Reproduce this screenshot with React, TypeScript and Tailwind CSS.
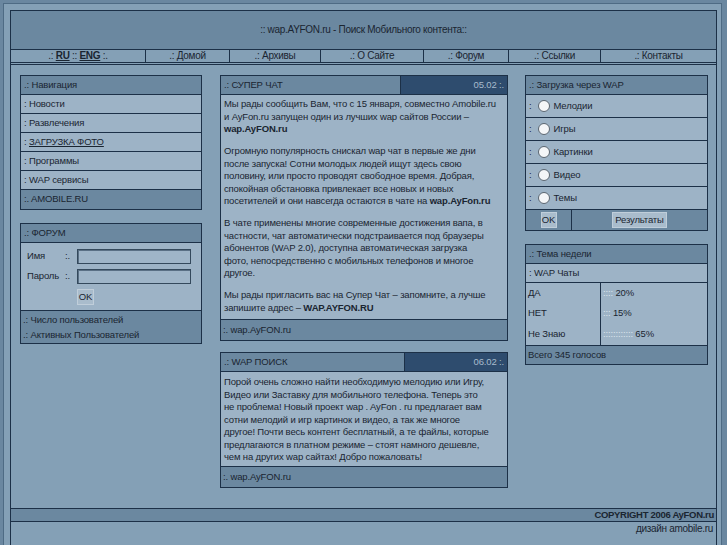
import React from "react";

const B = "border-[#1c3047]";

function BoxHead({ children }: { children: React.ReactNode }) {
  return (
    <div className={`h-[19px] bg-[#6b88a0] border-b ${B} flex items-center pl-[3px] whitespace-nowrap`}>
      {children}
    </div>
  );
}

function NavRow({ children, last }: { children: React.ReactNode; last?: boolean }) {
  return (
    <div
      className={`h-[19px] flex items-center pl-[3px] whitespace-nowrap ${
        last ? "bg-[#6b88a0]" : `border-b ${B}`
      }`}
    >
      {children}
    </div>
  );
}

function Radio({ label }: { label: string }) {
  return (
    <div className={`h-[23px] border-b ${B} flex items-center pl-[3px] whitespace-nowrap`}>
      <span>:</span>
      <span className="ml-[6px] w-[12px] h-[12px] rounded-full bg-[#f4f6f8] border border-[#5a6570]" />
      <span className="ml-[4px]">{label}</span>
    </div>
  );
}

function NewsHead({ title, date, split }: { title: string; date: string; split: string }) {
  return (
    <div className={`h-[19px] flex border-b ${B}`}>
      <div className={`${split} bg-[#6b88a0] border-r ${B} flex items-center pl-[3px] whitespace-nowrap`}>
        {title}
      </div>
      <div className="flex-1 bg-[#2e4c6e] text-[#a7bbcd] flex items-center justify-end pr-[3px] whitespace-nowrap">
        {date}
      </div>
    </div>
  );
}

const navItems = [
  { w: "w-[84px]", t: ".: Домой" },
  { w: "w-[91px]", t: ".: Архивы" },
  { w: "w-[103px]", t: ".: О Сайте" },
  { w: "w-[85px]", t: ".: Форум" },
  { w: "w-[92px]", t: ".: Ссылки" },
];

const narrow = "tracking-[-0.3px]";

export default function App() {
  return (
    <div className="min-h-[545px] bg-[#6a87a0] pt-[3px] pl-[3px] font-['Liberation_Sans',Arial,sans-serif] text-[9.5px] tracking-[-0.15px] leading-[12.5px] text-[#1a2531] overflow-hidden">
      <div className="w-[719px] border border-[#4e6b84] bg-[#84a0b6] pt-[6px] pl-[6px] pr-[4px] pb-[30px]">
        <div className={`w-[707px] border ${B} bg-[#84a0b6]`}>
          {/* header */}
          <div className={`h-[39px] bg-[#6b88a0] border-b ${B} flex items-center justify-center text-[10px] ${narrow}`}>
            :: wap.AYFON.ru - Поиск Мобильного контента::
          </div>
          {/* nav */}
          <div className={`h-[15px] flex border-b-[3px] border-double ${B} text-[10px] leading-[12px] ${narrow}`}>
            <div className={`w-[135px] border-r ${B} flex justify-center items-start whitespace-nowrap`}>
              .:&nbsp;<b className="underline font-bold">RU</b>&nbsp;::&nbsp;<b className="underline font-bold">ENG</b>&nbsp;:.
            </div>
            {navItems.map((n) => (
              <div key={n.t} className={`${n.w} border-r ${B} flex justify-center items-start whitespace-nowrap`}>
                {n.t}
              </div>
            ))}
            <div className="flex-1 flex justify-center items-start whitespace-nowrap">.: Контакты</div>
          </div>

          {/* content */}
          <div className="flex pt-[10px] pl-[9px] pb-[20px]">
            {/* left column */}
            <div className="w-[182px] flex flex-col">
              <div className={`border ${B} bg-[#9db3c6]`}>
                <BoxHead>.: Навигация</BoxHead>
                <NavRow>: Новости</NavRow>
                <NavRow>: Развлечения</NavRow>
                <NavRow>
                  :&nbsp;<span className="underline">ЗАГРУЗКА ФОТО</span>
                </NavRow>
                <NavRow>: Программы</NavRow>
                <NavRow>: WAP сервисы</NavRow>
                <NavRow last>:. AMOBILE.RU</NavRow>
              </div>

              <div className={`mt-[13px] border ${B} bg-[#9db3c6]`}>
                <BoxHead>.: ФОРУМ</BoxHead>
                <div className={`pt-[6px] pb-[5px] border-b ${B}`}>
                  <div className="flex items-center h-[15px]">
                    <span className="pl-[6px] w-[44px]">Имя</span>
                    <span className="w-[12px]">:.</span>
                    <input className="w-[114px] h-[15px] border border-[#34495c] bg-[#9fb5c8] shadow-[inset_1px_1px_0_#5a7085] outline-none" />
                  </div>
                  <div className="flex items-center h-[15px] mt-[5px]">
                    <span className="pl-[6px] w-[44px]">Пароль</span>
                    <span className="w-[12px]">:.</span>
                    <input className="w-[114px] h-[15px] border border-[#34495c] bg-[#9fb5c8] shadow-[inset_1px_1px_0_#5a7085] outline-none" />
                  </div>
                  <div className="mt-[5px] ml-[56px] w-[17px] h-[16px] bg-[#a9bccc] border border-[#c0ceda] flex items-center justify-center">
                    OK
                  </div>
                </div>
                <div className="bg-[#6b88a0] pt-[1px] pb-[1px] pl-[2px] leading-[15px] h-[32px]">
                  <div>.: Число пользователей</div>
                  <div>.: Активных Пользователей</div>
                </div>
              </div>
            </div>

            {/* middle column */}
            <div className="w-[288px] ml-[18px] flex flex-col">
              <div className={`border ${B} bg-[#9db3c6]`}>
                <NewsHead title=".: СУПЕР ЧАТ" date="05.02 :." split="w-[180px]" />
                <div className="pt-[3px] pb-[3px] pl-[3px] h-[224px] flex flex-col gap-[9.5px] whitespace-nowrap">
                  <p>
                    Мы рады сообщить Вам, что с 15 января, совместно Amobile.ru
                    <br />и AyFon.ru запущен один из лучших wap сайтов России –
                    <br />
                    <b>wap.AyFON.ru</b>
                  </p>
                  <p>
                    Огромную популярность снискал wap чат в первые же дни
                    <br />после запуска! Сотни молодых людей ищут здесь свою
                    <br />половину, или просто проводят свободное время. Добрая,
                    <br />спокойная обстановка привлекает все новых и новых
                    <br />посетителей и они навсегда остаются в чате на <b>wap.AyFon.ru</b>
                  </p>
                  <p>
                    В чате применены многие современные достижения вапа, в
                    <br />частности, чат автоматически подстраивается под браузеры
                    <br />абонентов (WAP 2.0), доступна автоматическая загрузка
                    <br />фото, непосредственно с мобильных телефонов и многое
                    <br />другое.
                  </p>
                  <p>
                    Мы рады пригласить вас на Супер Чат – запомните, а лучше
                    <br />запишите адрес – <b>WAP.AYFON.RU</b>
                  </p>
                </div>
                <div className={`h-[21px] border-t ${B} bg-[#6b88a0] flex items-center pl-[2px]`}>:. wap.AyFON.ru</div>
              </div>

              <div className={`mt-[11px] border ${B} bg-[#9db3c6]`}>
                <NewsHead title=".: WAP ПОИСК" date="06.02 :." split="w-[184px]" />
                <div className="pt-[4px] pl-[3px] h-[94px] whitespace-nowrap">
                  Порой очень сложно найти необходимую мелодию или Игру,
                  <br />Видео или Заставку для мобильного телефона. Теперь это
                  <br />не проблема! Новый проект wap . AyFon . ru предлагает вам
                  <br />сотни мелодий и игр картинок и видео, а так же многое
                  <br />другое! Почти весь контент бесплатный, а те файлы, которые
                  <br />предлагаются в платном режиме – стоят намного дешевле,
                  <br />чем на других wap сайтах! Добро пожаловать!
                </div>
                <div className={`h-[21px] border-t ${B} bg-[#6b88a0] flex items-center pl-[2px]`}>:. wap.AyFON.ru</div>
              </div>
            </div>

            {/* right column */}
            <div className="w-[183px] ml-[17px] flex flex-col">
              <div className={`border ${B} bg-[#9db3c6]`}>
                <BoxHead>.: Загрузка через WAP</BoxHead>
                <Radio label="Мелодии" />
                <Radio label="Игры" />
                <Radio label="Картинки" />
                <Radio label="Видео" />
                <Radio label="Темы" />
                <div className="h-[20px] flex bg-[#6b88a0]">
                  <div className={`w-[46px] border-r ${B} flex items-center justify-center`}>
                    <div className="w-[16px] h-[16px] bg-[#a9bccc] border border-[#c0ceda] flex items-center justify-center">OK</div>
                  </div>
                  <div className="flex-1 flex items-center justify-center">
                    <div className="h-[16px] px-[2px] bg-[#a9bccc] border border-[#c0ceda] flex items-center justify-center">
                      Результаты
                    </div>
                  </div>
                </div>
              </div>

              <div className={`mt-[13px] border ${B} bg-[#9db3c6]`}>
                <BoxHead>.: Тема недели</BoxHead>
                <div className={`h-[19px] border-b ${B} flex items-center pl-[3px]`}>: WAP Чаты</div>
                <div className={`flex border-b ${B} h-[63px]`}>
                  <div className={`w-[75px] border-r ${B} flex flex-col pl-[2px]`}>
                    <div className="h-[20px] flex items-center">ДА</div>
                    <div className="h-[21px] flex items-center">НЕТ</div>
                    <div className="h-[21px] flex items-center">Не Знаю</div>
                  </div>
                  <div className="flex-1 flex flex-col pl-[2px]">
                    <div className="h-[20px] flex items-center">
                      <span className="text-[#dde6ed]">::::</span>&nbsp;20%
                    </div>
                    <div className="h-[21px] flex items-center">
                      <span className="text-[#dde6ed]">:::</span>&nbsp;15%
                    </div>
                    <div className="h-[21px] flex items-center">
                      <span className="text-[#dde6ed]">::::::::::::</span>&nbsp;65%
                    </div>
                  </div>
                </div>
                <div className="h-[18px] bg-[#6b88a0] flex items-center pl-[2px]">Всего 345 голосов</div>
              </div>
            </div>
          </div>

          {/* footer */}
          <div className={`h-[14px] border-y ${B} bg-[#6b88a0] flex items-center justify-end pr-[2px] font-bold text-[9.5px] ${narrow}`}>
            COPYRIGHT 2006 AyFON.ru
          </div>
          <div className={`h-[40px] flex justify-end pr-[3px] pt-[1px] text-[10px] ${narrow}`}>
            дизайн amobile.ru
          </div>
        </div>
      </div>
    </div>
  );
}
